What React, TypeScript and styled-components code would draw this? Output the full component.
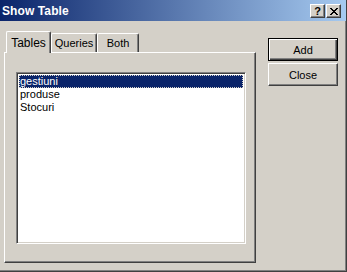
import React, { useState } from "react";
import styled, { createGlobalStyle } from "styled-components";

const GlobalStyle = createGlobalStyle`
  html, body {
    margin: 0;
    padding: 0;
    background: #d4d0c8;
  }
  * {
    box-sizing: border-box;
  }
`;

const Window = styled.div`
  width: 347px;
  height: 272px;
  display: flex;
  flex-direction: column;
  background: #d4d0c8;
  border-right: 1px solid #404040;
  border-bottom: 1px solid #404040;
  box-shadow: inset -1px -1px 0 #808080;
  font-family: "Liberation Sans", Arial, sans-serif;
  font-size: 11px;
  color: #000;
  overflow: hidden;
`;

const TitleBar = styled.div`
  height: 21px;
  flex-shrink: 0;
  display: flex;
  align-items: center;
  justify-content: space-between;
  padding: 0 5px 0 2px;
  background: linear-gradient(to right, #0a246a, #a6caf0);
`;

const Title = styled.div`
  color: #fff;
  font-weight: bold;
  font-size: 12px;
  letter-spacing: 0.1px;
`;

const CaptionButtons = styled.div`
  display: flex;
  gap: 1px;
  margin-top: 1px;
`;

const CaptionButton = styled.div`
  width: 15px;
  height: 14px;
  display: flex;
  align-items: center;
  justify-content: center;
  background: #d4d0c8;
  border-top: 1px solid #fff;
  border-left: 1px solid #fff;
  border-right: 1px solid #404040;
  border-bottom: 1px solid #404040;
  box-shadow: inset -1px -1px 0 #808080;
  font-weight: bold;
  font-size: 11px;
  line-height: 1;
`;

const Body = styled.div`
  flex: 1;
  display: flex;
  padding: 10px 0 8px 4px;
`;

const TabControl = styled.div`
  width: 252px;
  display: flex;
  flex-direction: column;
`;

const TabRow = styled.div`
  display: flex;
  align-items: flex-end;
  padding-left: 2px;
  margin-bottom: -1px;
  position: relative;
  z-index: 1;
`;

const Tab = styled.div<{ $active?: boolean; $w: number }>`
  width: ${(p) => p.$w}px;
  height: ${(p) => (p.$active ? 22 : 19)}px;
  margin-bottom: ${(p) => (p.$active ? 0 : 1)}px;
  display: flex;
  align-items: ${(p) => (p.$active ? "flex-start" : "center")};
  justify-content: center;
  padding-top: ${(p) => (p.$active ? 4 : 0)}px;
  background: #d4d0c8;
  border-top: 1px solid #fff;
  border-left: 1px solid #fff;
  border-right: 1px solid #404040;
  border-top-left-radius: 2px;
  border-top-right-radius: 2px;
  box-shadow: inset -1px 0 0 #808080;
  font-size: ${(p) => (p.$active ? 12 : 11)}px;
  cursor: default;
`;

const Panel = styled.div`
  flex: 1;
  display: flex;
  padding: 19px 9px 18px 11px;
  background: #d4d0c8;
  border-top: 1px solid #fff;
  border-left: 1px solid #fff;
  border-right: 1px solid #404040;
  border-bottom: 1px solid #404040;
  box-shadow: inset -1px -1px 0 #808080;
`;

const ListBox = styled.div`
  flex: 1;
  background: #fff;
  border-top: 1px solid #808080;
  border-left: 1px solid #808080;
  border-right: 1px solid #fff;
  border-bottom: 1px solid #fff;
  box-shadow: inset 1px 1px 0 #404040, inset -1px -1px 0 #d4d0c8;
  padding: 2px 2px 0 2px;
`;

const Row = styled.div<{ $selected?: boolean }>`
  height: 13px;
  line-height: 12px;
  padding-left: 1px;
  font-size: 11px;
  background: ${(p) => (p.$selected ? "#0a246a" : "transparent")};
  color: ${(p) => (p.$selected ? "#fff" : "#000")};
  outline: ${(p) => (p.$selected ? "1px dotted #d4d0c8" : "none")};
  outline-offset: -1px;
  cursor: default;
`;

const ButtonColumn = styled.div`
  display: flex;
  flex-direction: column;
  gap: 2px;
  margin: 7px 0 0 12px;
`;

const Button = styled.div<{ $default?: boolean }>`
  width: 70px;
  height: 23px;
  display: flex;
  align-items: center;
  justify-content: center;
  background: #d4d0c8;
  font-size: 11px;
  cursor: default;
  ${(p) =>
    p.$default
      ? `border: 1px solid #000;
         box-shadow: inset 1px 1px 0 #fff, inset -1px -1px 0 #404040, inset -2px -2px 0 #808080;`
      : `border-top: 1px solid #fff;
         border-left: 1px solid #fff;
         border-right: 1px solid #404040;
         border-bottom: 1px solid #404040;
         box-shadow: inset -1px -1px 0 #808080;`}
`;

const tabs = [
  { label: "Tables", w: 45 },
  { label: "Queries", w: 46 },
  { label: "Both", w: 42 },
];

const tables = ["gestiuni", "produse", "Stocuri"];

export default function App() {
  const [tab, setTab] = useState(0);
  const [selected, setSelected] = useState(0);

  return (
    <Window>
      <GlobalStyle />
      <TitleBar>
        <Title>Show Table</Title>
        <CaptionButtons>
          <CaptionButton>?</CaptionButton>
          <CaptionButton>
            <svg width="8" height="7" viewBox="0 0 8 7" shapeRendering="crispEdges">
              <path
                d="M0 0h2v1h-2zM6 0h2v1h-2zM1 1h2v1h-2zM5 1h2v1h-2zM2 2h4v1h-4zM3 3h2v1h-2zM2 4h4v1h-4zM1 5h2v1h-2zM5 5h2v1h-2zM0 6h2v1h-2zM6 6h2v1h-2z"
                fill="#000"
              />
            </svg>
          </CaptionButton>
        </CaptionButtons>
      </TitleBar>
      <Body>
        <TabControl>
          <TabRow>
            {tabs.map((t, i) => (
              <Tab key={t.label} $w={t.w} $active={i === tab} onClick={() => setTab(i)}>
                {t.label}
              </Tab>
            ))}
          </TabRow>
          <Panel>
            <ListBox>
              {tables.map((name, i) => (
                <Row key={name} $selected={i === selected} onClick={() => setSelected(i)}>
                  {name}
                </Row>
              ))}
            </ListBox>
          </Panel>
        </TabControl>
        <ButtonColumn>
          <Button $default>Add</Button>
          <Button>Close</Button>
        </ButtonColumn>
      </Body>
    </Window>
  );
}
